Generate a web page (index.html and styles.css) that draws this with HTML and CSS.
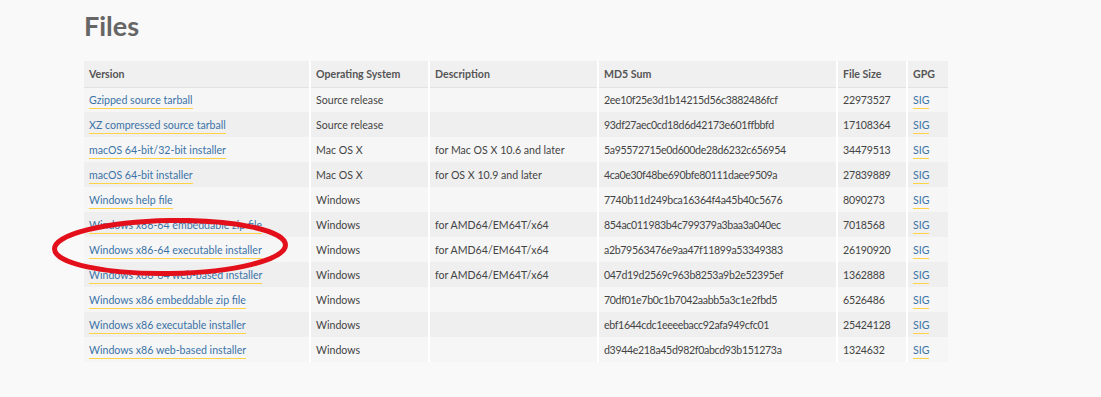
FILE: index.html
```html
<!DOCTYPE html>
<html>
<head>
<meta charset="utf-8">
<link rel="stylesheet" href="styles.css">
</head>
<body>
<div class="page">
  <h1 class="title">Files</h1>
  <div class="table-wrap">
    <table class="files">
      <colgroup>
        <col class="c-ver"><col class="c-os"><col class="c-desc"><col class="c-md5"><col class="c-size"><col class="c-gpg">
      </colgroup>
      <thead>
        <tr><th>Version</th><th>Operating System</th><th>Description</th><th>MD5 Sum</th><th>File Size</th><th>GPG</th></tr>
      </thead>
      <tbody>
        <tr><td><a>Gzipped source tarball</a></td><td>Source release</td><td></td><td class="md5">2ee10f25e3d1b14215d56c3882486fcf</td><td class="num">22973527</td><td><a>SIG</a></td></tr>
        <tr><td><a>XZ compressed source tarball</a></td><td>Source release</td><td></td><td class="md5">93df27aec0cd18d6d42173e601ffbbfd</td><td class="num">17108364</td><td><a>SIG</a></td></tr>
        <tr><td><a>macOS 64-bit/32-bit installer</a></td><td>Mac OS X</td><td>for Mac OS X 10.6 and later</td><td class="md5">5a95572715e0d600de28d6232c656954</td><td class="num">34479513</td><td><a>SIG</a></td></tr>
        <tr><td><a>macOS 64-bit installer</a></td><td>Mac OS X</td><td>for OS X 10.9 and later</td><td class="md5">4ca0e30f48be690bfe80111daee9509a</td><td class="num">27839889</td><td><a>SIG</a></td></tr>
        <tr><td><a>Windows help file</a></td><td>Windows</td><td></td><td class="md5">7740b11d249bca16364f4a45b40c5676</td><td class="num">8090273</td><td><a>SIG</a></td></tr>
        <tr><td><a>Windows x86-64 embeddable zip file</a></td><td>Windows</td><td>for AMD64/EM64T/x64</td><td class="md5">854ac011983b4c799379a3baa3a040ec</td><td class="num">7018568</td><td><a>SIG</a></td></tr>
        <tr><td><a>Windows x86-64 executable installer</a></td><td>Windows</td><td>for AMD64/EM64T/x64</td><td class="md5">a2b79563476e9aa47f11899a53349383</td><td class="num">26190920</td><td><a>SIG</a></td></tr>
        <tr><td><a>Windows x86-64 web-based installer</a></td><td>Windows</td><td>for AMD64/EM64T/x64</td><td class="md5">047d19d2569c963b8253a9b2e52395ef</td><td class="num">1362888</td><td><a>SIG</a></td></tr>
        <tr><td><a>Windows x86 embeddable zip file</a></td><td>Windows</td><td></td><td class="md5">70df01e7b0c1b7042aabb5a3c1e2fbd5</td><td class="num">6526486</td><td><a>SIG</a></td></tr>
        <tr><td><a>Windows x86 executable installer</a></td><td>Windows</td><td></td><td class="md5">ebf1644cdc1eeeebacc92afa949cfc01</td><td class="num">25424128</td><td><a>SIG</a></td></tr>
        <tr><td><a>Windows x86 web-based installer</a></td><td>Windows</td><td></td><td class="md5">d3944e218a45d982f0abcd93b151273a</td><td class="num">1324632</td><td><a>SIG</a></td></tr>
      </tbody>
    </table>
    <svg class="circle" width="250" height="70" viewBox="0 0 250 70">
      <ellipse cx="119" cy="29" rx="115.5" ry="26.5" fill="none" stroke="#e3101b" stroke-width="5" transform="rotate(-1 119 29)"/>
    </svg>
  </div>
</div>
</body>
</html>
```

FILE: styles.css
```css
html, body {
  margin: 0;
  padding: 0;
  background: #f9f9f9;
}
body {
  font-family: "Lato", "Liberation Sans", sans-serif;
  color: #444;
}
.page {
  padding: 0 0 0 84px;
}
.title {
  margin: 0;
  padding-top: 10px;
  height: 61px;
  box-sizing: border-box;
  font-size: 27px;
  line-height: 32px;
  font-weight: 700;
  color: #666;
}
.table-wrap {
  position: relative;
  width: 864px;
}
.files {
  border-collapse: collapse;
  table-layout: fixed;
  width: 864px;
  font-size: 10.6px;
}
.c-ver { width: 226px; }
.c-os { width: 119px; }
.c-desc { width: 169px; }
.c-md5 { width: 239px; }
.c-size { width: 70px; }
.c-gpg { width: 41px; }
.files th, .files td {
  height: 25px;
  padding: 0 0 0 5px;
  text-align: left;
  white-space: nowrap;
  border-right: 2px solid #fff;
  box-sizing: border-box;
}
.files th:last-child, .files td:last-child { border-right: none; }
.files th {
  background: #f0f0f0;
  font-weight: 700;
  color: #555;
  height: 26px;
  border-bottom: 1px solid #e2e2e2;
}
.files td.md5 { letter-spacing: -0.35px; }
.files td.num { letter-spacing: -0.2px; }
.files tbody tr:nth-child(odd) td { background: #f6f6f6; }
.files tbody tr:nth-child(even) td { background: #efefef; }
.files a {
  color: #3b73a7;
  text-decoration: none;
  border-bottom: 1px solid #ffd343;
  padding-bottom: 2px;
}
.circle {
  position: absolute;
  left: -33px;
  top: 157px;
  pointer-events: none;
}
```
